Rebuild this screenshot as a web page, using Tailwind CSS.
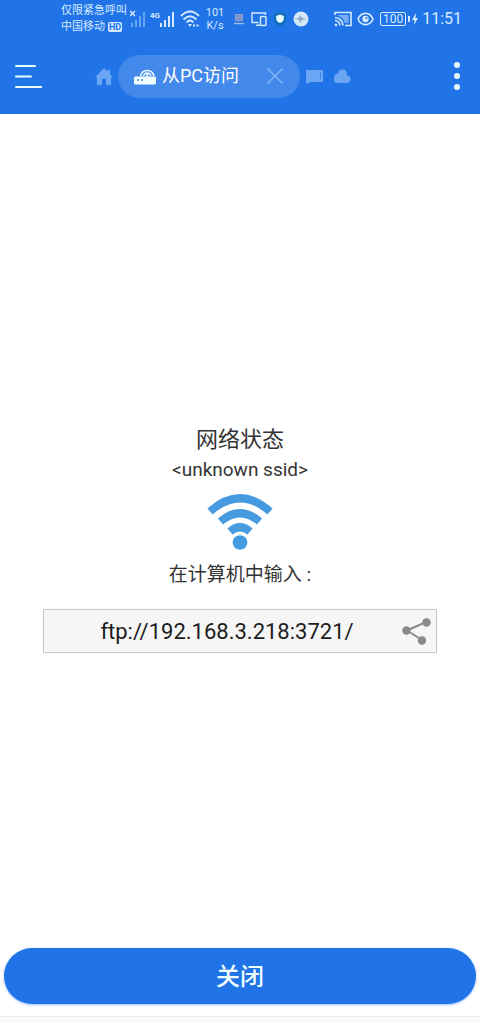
<!DOCTYPE html>
<html lang="zh-CN">

<head>
  <meta charset="UTF-8" />
  <meta name="viewport" content="width=device-width, initial-scale=1.0" />
  <title>从PC访问</title>
  <script src="https://cdn.jsdelivr.net/npm/@tailwindcss/browser@4"></script>
</head>

<body class="min-h-screen flex flex-col bg-white text-[#333] font-[Roboto,'Noto_Sans_CJK_SC',sans-serif]">
  <header class="bg-[#2174e8] text-white">
    <!-- Status bar -->
    <div class="h-[38px] flex items-center justify-between pl-[61px] pr-[18px] text-[#d5eaff]">
      <div class="flex items-center">
        <div class="text-[11px] leading-4">
          <p>仅限紧急呼叫</p>
          <p class="flex items-center gap-[3px]">中国移动
            <span class="rounded-xs bg-[#d5eaff] px-px text-[9px] leading-[10px] font-bold text-[#2174e8]">HD</span>
          </p>
        </div>
        <svg class="ml-[3px] w-4 h-5" viewBox="0 0 16 20" fill="currentColor">
          <path d="M0 2l5 5M5 2L0 7" stroke="currentColor" stroke-width="1.5" />
          <path opacity=".4" d="M1 14h2v4H1zM5 11h2v7H5zM9 7h2v11H9zM13 3h2v15h-2z" />
        </svg>
        <svg class="ml-1 w-[26px] h-5" viewBox="0 0 26 20" fill="currentColor">
          <text x="0" y="9" font-size="8" font-weight="700">4G</text>
          <path d="M10 14h2v4h-2zM14 11h2v7h-2zM18 7h2v11h-2zM22 3h2v15h-2z" />
        </svg>
        <svg class="ml-1 w-5 h-5" viewBox="0 0 20 20" fill="none" stroke="currentColor" stroke-width="1.8">
          <path d="M1 7Q10-2 19 7M3.500 10.500Q10 4 16.500 10.500M6.500 13.500Q10 9.500 13.500 13.500" />
          <path d="M8 15h4l-2 3z" fill="currentColor" stroke="none" />
          <path d="M13 16.500h2M16.500 16.500h2" />
        </svg>
        <div class="ml-[5px] w-5 text-center text-[11px] leading-[13px]">
          <p>101</p>
          <p>K/s</p>
        </div>
        <svg class="ml-2 w-3 h-3" viewBox="0 0 12 12">
          <path d="M2 1h8v7H2z" fill="#8fa3d9" />
          <path d="M3 3h6M3 6h6" stroke="#6178b5" />
          <path d="M1 10.500h10" stroke="#a5b4df" stroke-width="1.500" />
        </svg>
        <svg class="ml-1.5 w-4 h-4" viewBox="0 0 16 16" fill="none" stroke="currentColor" stroke-width="1.400">
          <path d="M14.500 4V2H1v9.500h6.500M5 14.300h4" />
          <rect x="9.500" y="5.500" width="5.500" height="9" rx="1" />
        </svg>
        <svg class="ml-1.5 w-3.5 h-3.5" viewBox="0 0 14 14">
          <path d="M7 0l6 2v5q0 4.500-6 7q-6-2.500-6-7V2z" fill="#0c6fb5" />
          <path d="M7 2.500l3.800 1.500v3q0 2.500-3.800 4q-3.800-1.500-3.800-4V4z" fill="#e9ffff" />
        </svg>
        <svg class="ml-1.5 w-4 h-4" viewBox="0 0 16 16">
          <circle cx="8" cy="8" r="7.500" fill="#d5e6f6" />
          <path d="M2 7.500l4-.5 1-3 2 3 5 1-5 1-2 3-1-3z" fill="#8ba9c8" />
        </svg>
      </div>
      <div class="flex items-center">
        <svg class="w-[18px] h-4" viewBox="0 0 18 16" fill="none" stroke="currentColor" stroke-width="1.600">
          <path d="M1 4V1.500h16v13h-6" />
          <path d="M4 4h10.500v8H11Q9 6 4 5z" fill="currentColor" fill-opacity=".5" stroke="none" />
          <path d="M1 6.500a8 8 0 0 1 8 8M1 9.500a5 5 0 0 1 5 5" />
          <circle cx="2" cy="14" r="1.300" fill="currentColor" stroke="none" />
        </svg>
        <svg class="ml-[5px] w-[17px] h-4" viewBox="0 0 17 16" fill="none" stroke="currentColor" stroke-width="1.600">
          <path d="M1 8C4 .5 13 .5 16 8C13 15.500 4 15.500 1 8z" />
          <circle cx="8.500" cy="8" r="3.200" fill="currentColor" stroke="none" />
          <circle cx="9.500" cy="7" r="1" fill="#2174e8" stroke="none" />
        </svg>
        <div class="ml-1.5 flex items-center gap-0.5">
          <span class="w-[26px] rounded-xs border border-current text-center text-xs leading-3">100</span>
          <span class="w-0.5 h-1.5 bg-current"></span>
        </div>
        <svg class="ml-0.5 w-1.5 h-3" viewBox="0 0 6 12" fill="currentColor">
          <path d="M4 0L0 7h2.500L2 12l4-7H3.500z" />
        </svg>
        <time class="ml-1 text-base leading-5">11:51</time>
      </div>
    </div>

    <!-- Toolbar -->
    <div class="h-[76px] flex items-center pl-[14px] pr-[17px]">
      <button type="button" aria-label="菜单">
        <svg class="w-7 h-7" viewBox="0 0 28 28" stroke="#e8fbff" stroke-width="2" stroke-linecap="round">
          <path d="M2 4h19M2 14.500h15M2 25h26" />
        </svg>
      </button>
      <a href="#" class="ml-[53px]" aria-label="主页">
        <svg class="w-[18px] h-[18px]" viewBox="0 0 18 18" fill="#6ba6f5">
          <path d="M9 1l3.500 3.500V3H15v4l3 3.500h-2V18h-5v-6H7v6H2v-7.500H0z" />
        </svg>
      </a>
      <div class="ml-[5px] h-[43px] w-[182px] flex items-center rounded-full bg-[#4388eb] pl-4 pr-4">
        <svg class="w-[22px] h-[18px]" viewBox="0 0 22 18" fill="none" stroke="#f2ffff">
          <path d="M6.500 9A7 7.500 0 0 1 20 9" stroke-width="1.500" />
          <path d="M9.500 9A4 4.500 0 0 1 17 9" stroke-width="1.400" />
          <path d="M13.300 6v5" stroke-width="1.800" />
          <path d="M1.500 9.500h19q1.500 0 1.500 1.500v5q0 1.500-1.500 1.500h-19Q0 17.500 0 16V11Q0 9.500 1.500 9.500z" fill="#f2ffff" stroke="none" />
          <path d="M3 13h2M7 13h2" stroke="#4388eb" stroke-width="1.600" />
        </svg>
        <span class="ml-1.5 text-lg whitespace-nowrap">从PC访问</span>
        <button type="button" class="ml-auto" aria-label="关闭标签">
          <svg class="w-[18px] h-[18px]" viewBox="0 0 18 18" stroke="#83b5f8" stroke-width="1.500">
            <path d="M1.500 1.500l15 15M16.500 1.500l-15 15" />
          </svg>
        </button>
      </div>
      <a href="#" class="ml-1.5" aria-label="本地">
        <svg class="w-[17px] h-4" viewBox="0 0 17 16" fill="#6ba6f5">
          <path d="M0 2h17v12H4l-2 1.500H0z" />
          <path d="M14.500 4v7" stroke="#3c82e8" />
        </svg>
      </a>
      <a href="#" class="ml-2.5" aria-label="云存储">
        <svg class="w-[18px] h-4" viewBox="0 0 18 16" fill="#6ba6f5">
          <circle cx="9.500" cy="6" r="4.500" />
          <circle cx="5" cy="9" r="3.500" />
          <rect x="1" y="7.500" width="16.500" height="7.500" rx="3.700" />
        </svg>
      </a>
      <button type="button" class="ml-auto" aria-label="更多">
        <svg class="w-3 h-[30px]" viewBox="0 0 12 30" fill="#e8fbff">
          <circle cx="6" cy="4" r="3" />
          <circle cx="6" cy="15" r="3" />
          <circle cx="6" cy="26" r="3" />
        </svg>
      </button>
    </div>
  </header>

  <main class="flex-1 flex flex-col items-center justify-center pt-4 px-[43px]">
    <h1 class="text-[22px] leading-[30px]">网络状态</h1>
    <p class="text-[19px] leading-[30px]">&lt;unknown ssid&gt;</p>
    <svg class="mt-2 w-[66px] h-[58px]" viewBox="0 0 66 58" fill="none" stroke="#469be0" stroke-width="8">
      <path d="M3 18.500Q33 -8 63 18.500" />
      <path d="M13.500 28.500Q33 12 52.500 28.500" />
      <path d="M23 38.500Q33 30 43 38.500" />
      <circle cx="33" cy="49.500" r="7.300" fill="#469be0" stroke="none" />
    </svg>
    <label for="address" class="mt-2.5 text-[19px] leading-7">在计算机中输入 :</label>
    <div class="mt-5 w-full h-11 flex items-center border border-[#c8c8c8] bg-[#f6f6f6] pl-2 pr-1">
      <input id="address" type="text" readonly value="ftp://192.168.3.218:3721/"
        class="flex-1 min-w-0 bg-transparent text-center text-[22px] text-[#1c1c1c] outline-none" />
      <button type="button" aria-label="分享">
        <svg class="w-[30px] h-[30px]" viewBox="0 0 30 30" fill="#8a8a8a">
          <path d="M24 6L5 14.500L20 24" fill="none" stroke="#8a8a8a" stroke-width="2" />
          <circle cx="24.500" cy="6.500" r="4.200" />
          <circle cx="4.500" cy="14.500" r="4.200" />
          <circle cx="20" cy="24.500" r="4.200" />
        </svg>
      </button>
    </div>
  </main>

  <footer>
    <div class="px-1 pb-3">
      <button type="button"
        class="w-full h-14 rounded-full bg-[#2174e8] pt-0.5 text-2xl font-medium text-[#f2ffff] shadow-sm shadow-blue-500/40">关闭</button>
    </div>
    <div class="h-[7px] border-t border-[#ececec] bg-[#fafafa]"></div>
  </footer>
</body>

</html>
